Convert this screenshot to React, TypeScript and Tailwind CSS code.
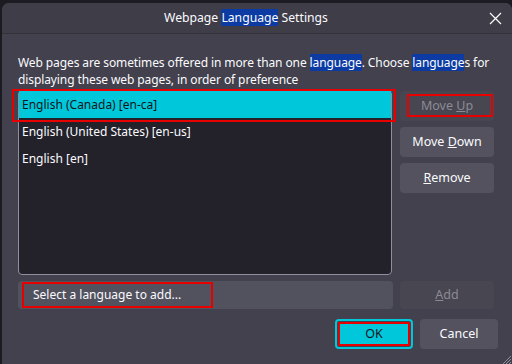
import React from "react";

const font = { fontFamily: '"Noto Sans", "Open Sans", sans-serif' };

function Hl({ children }: { children: React.ReactNode }) {
  return <span className="bg-[#0b3ba3]">{children}</span>;
}

function SideButton({
  children,
  disabled,
  outlined,
}: {
  children: React.ReactNode;
  disabled?: boolean;
  outlined?: boolean;
}) {
  return (
    <div
      className={
        "relative flex h-[30px] items-center justify-center rounded-[4px] text-[12.5px] " +
        (disabled ? "bg-[#474651] text-[#8c8b95]" : "bg-[#53525e] text-[#fbfbfe]")
      }
    >
      {outlined ? (
        <div className="absolute left-[7px] right-[1px] top-[3px] bottom-[4px] border-2 border-[#e80000]" />
      ) : null}
      <span>{children}</span>
    </div>
  );
}

const rows = ["English (Canada) [en-ca]", "English (United States) [en-us]", "English [en]"];

export default function App() {
  return (
    <div className="h-[364px] w-[512px] overflow-hidden bg-[#1c1b22] pl-[2px] pt-[3px]" style={font}>
      <div className="relative flex h-[362px] w-[510px] flex-col rounded-t-[7px] bg-[#42414d] text-[#fbfbfe]">
        {/* title bar */}
        <div className="relative flex h-[31px] items-center justify-center rounded-t-[7px] border-b border-[#34333c] bg-[#3e3d48] pr-[22px] text-[12.2px]">
          <span>
            Webpage <Hl>Language</Hl> Settings
          </span>
          <svg className="absolute right-[10px] top-[9px]" width="13" height="13" viewBox="0 0 13 13">
            <path d="M1 1 L12 12 M12 1 L1 12" stroke="#fbfbfe" strokeWidth="1.2" />
          </svg>
        </div>

        <div className="flex flex-1 flex-col px-[16px] pt-[20px]">
          <p className="text-[12px] leading-[17px] tracking-[-0.1px]">
            Web pages are sometimes offered in more than one <Hl>language</Hl>. Choose <Hl>language</Hl>s for
            displaying these web pages, in order of preference
          </p>

          <div className="mt-[2px] flex gap-[8px]">
            <div className="relative h-[185px] w-[374px] rounded-[4px] border border-[#8f8f9d] bg-[#23222b]">
              {rows.map((r, i) => (
                <div
                  key={r}
                  className={
                    "flex h-[27px] items-center px-[3px] text-[12px] " +
                    (i === 0 ? "bg-[#00c8da] text-[#15141a]" : "text-[#fbfbfe]")
                  }
                >
                  {r}
                </div>
              ))}
              <div className="absolute left-[-7px] right-[-5px] top-[-2px] h-[33px] border-2 border-[#e80000]" />
            </div>

            <div className="flex w-[94px] flex-col gap-[6px] pt-[1px]">
              <SideButton disabled outlined>
                Move <u>U</u>p
              </SideButton>
              <SideButton>
                Move <u>D</u>own
              </SideButton>
              <SideButton>
                <u>R</u>emove
              </SideButton>
            </div>
          </div>

          <div className="mt-[6px] flex gap-[7px]">
            <div className="relative flex h-[28px] w-[375px] items-center rounded-[4px] bg-[#52515e] pl-[15px] text-[12px]">
              <div className="absolute left-[4px] top-[1px] h-[26px] w-[191px] border-2 border-[#e80000]" />
              <span>Select a language to add...</span>
            </div>
            <div className="flex h-[28px] w-[94px] items-center justify-center rounded-[4px] bg-[#474651] text-[12.5px] text-[#8c8b95]">
              <span>
                <u>A</u>dd
              </span>
            </div>
          </div>

          <div className="mt-[10px] flex justify-end gap-[7px]">
            <div className="flex h-[30px] w-[78px] items-center justify-center rounded-[4px] border-2 border-[#00c8da] p-[1px]">
              <div className="flex h-full w-full items-center justify-center border-2 border-[#e80000] bg-[#00c8da] text-[12.5px] text-[#15141a]">
                OK
              </div>
            </div>
            <div className="mr-[-2px] flex h-[30px] w-[78px] items-center justify-center rounded-[4px] bg-[#53525e] text-[12.5px]">
              Cancel
            </div>
          </div>
        </div>

        <svg className="absolute bottom-0 right-0" width="12" height="12" viewBox="0 0 12 12">
          <path d="M11 3 L3 11 M11 6 L6 11 M11 9 L9 11" stroke="#8f8f9d" strokeWidth="1" />
        </svg>
      </div>
    </div>
  );
}
